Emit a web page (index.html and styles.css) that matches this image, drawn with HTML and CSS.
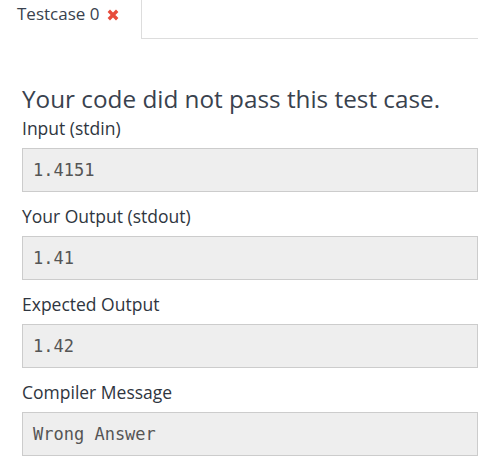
FILE: index.html
```html
<!DOCTYPE html>
<html>
<head>
<meta charset="utf-8">
<link rel="stylesheet" href="styles.css">
</head>
<body>
<div class="tabs">
  <div class="tab">Testcase 0
    <svg class="cross" width="12" height="12" viewBox="0 0 12 12"><path d="M1.8 1.8 L10.2 10.2 M10.2 1.8 L1.8 10.2" stroke="#e74c3c" stroke-width="3.4" stroke-linecap="butt"/></svg>
  </div>
  <div class="tab-rest"></div>
</div>
<div class="content">
  <h3 class="title">Your code did not pass this test case.</h3>
  <div class="section">
    <div class="label">Input (stdin)</div>
    <pre class="box">1.4151</pre>
  </div>
  <div class="section">
    <div class="label">Your Output (stdout)</div>
    <pre class="box">1.41</pre>
  </div>
  <div class="section">
    <div class="label">Expected Output</div>
    <pre class="box">1.42</pre>
  </div>
  <div class="section">
    <div class="label">Compiler Message</div>
    <pre class="box">Wrong Answer</pre>
  </div>
</div>
</body>
</html>
```
FILE: styles.css
```css
html, body {
  margin: 0;
  padding: 0;
  background: #fff;
}
body {
  font-family: "Open Sans", sans-serif;
  color: #39424e;
}
.tabs {
  display: flex;
  height: 39px;
}
.tab {
  width: 124px;
  padding-left: 17px;
  border-right: 1px solid #ddd;
  font-size: 17px;
  line-height: 20px;
  padding-top: 4px;
  display: flex;
  align-items: flex-start;
  gap: 8px;
  color: #39424e;
}
.cross {
  margin-top: 5px;
}
.tab-rest {
  flex: 1;
  border-bottom: 1px solid #ddd;
}
.content {
  padding: 0 0 0 22px;
}
.title {
  margin: 45px 0 2px 0;
  font-size: 24.3px;
  line-height: 30px;
  font-weight: 400;
}
.section {
  display: flex;
  flex-direction: column;
}
.label {
  font-size: 17.5px;
  line-height: 24px;
  margin-bottom: 8px;
  color: #2f3640;
}
.box {
  margin: 0 0 12px 0;
  box-sizing: border-box;
  height: 44px;
  background: #eee;
  border: 1px solid #ccc;
  font-family: "DejaVu Sans Mono", monospace;
  font-size: 17px;
  line-height: 42px;
  padding: 0 10px;
  color: #555;
}
```
